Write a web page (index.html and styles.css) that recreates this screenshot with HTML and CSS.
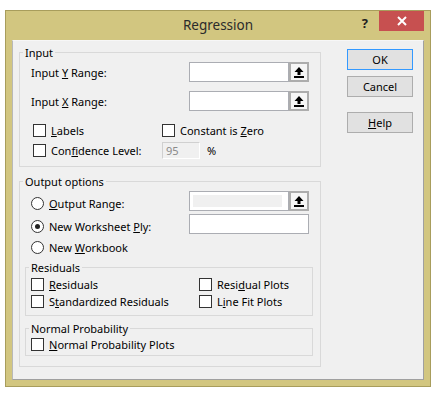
FILE: index.html
```html
<!DOCTYPE html>
<html lang="en">
<head>
    <meta charset="UTF-8">
    <title>Regression</title>
    <link rel="stylesheet" href="styles.css">
</head>
<body>

    <div class="window">
        <div class="titlebar">
            <div></div>
            <div class="title">Regression</div>
            <div class="controls">
                <span class="help-mark">?</span>
                <span class="close-btn">
                    <svg width="10" height="10" viewBox="0 0 10 10"><path d="M1 1 L9 9 M9 1 L1 9" stroke="#fff" stroke-width="2"/></svg>
                </span>
            </div>
        </div>

        <div class="client">
            <div class="groups">
                <fieldset class="group input-group">
                    <legend>Input</legend>
                    <div class="range-row">
                        <span class="range-label">Input <u>Y</u> Range:</span>
                        <div class="range-box">
                            <span class="range-field"></span>
                            <span class="ref-btn"><svg width="10" height="11" viewBox="0 0 10 11"><path d="M5 0 L9.5 5 L6.5 5 L6.5 8 L3.5 8 L3.5 5 L0.5 5 Z" fill="#000"/><rect x="0" y="9" width="10" height="2" fill="#000"/></svg></span>
                        </div>
                    </div>
                    <div class="range-row">
                        <span class="range-label">Input <u>X</u> Range:</span>
                        <div class="range-box">
                            <span class="range-field"></span>
                            <span class="ref-btn"><svg width="10" height="11" viewBox="0 0 10 11"><path d="M5 0 L9.5 5 L6.5 5 L6.5 8 L3.5 8 L3.5 5 L0.5 5 Z" fill="#000"/><rect x="0" y="9" width="10" height="2" fill="#000"/></svg></span>
                        </div>
                    </div>
                    <div class="input-checks">
                        <label class="check"><span class="box"></span><span><u>L</u>abels</span></label>
                        <label class="check"><span class="box"></span><span>Constant is <u>Z</u>ero</span></label>
                        <label class="check"><span class="box"></span><span>Con<u>f</u>idence Level:</span></label>
                        <div class="level">
                            <span class="level-field">95</span>
                            <span class="pct">%</span>
                        </div>
                    </div>
                </fieldset>

                <fieldset class="group output-group">
                    <legend>Output options</legend>
                    <div class="radio-row">
                        <span class="radio-label"><span class="radio"></span><span><u>O</u>utput Range:</span></span>
                        <div class="range-box">
                            <span class="range-field disabled"><span class="dim"></span></span>
                            <span class="ref-btn"><svg width="10" height="11" viewBox="0 0 10 11"><path d="M5 0 L9.5 5 L6.5 5 L6.5 8 L3.5 8 L3.5 5 L0.5 5 Z" fill="#000"/><rect x="0" y="9" width="10" height="2" fill="#000"/></svg></span>
                        </div>
                    </div>
                    <div class="radio-row second">
                        <span class="radio-label"><span class="radio checked"></span><span>New Worksheet <u>P</u>ly:</span></span>
                        <span class="ply-field"></span>
                    </div>
                    <div class="radio-row third">
                        <span class="radio-label"><span class="radio"></span><span>New <u>W</u>orkbook</span></span>
                    </div>

                    <fieldset class="group sub-group residuals">
                        <legend>Residuals</legend>
                        <div class="sub-checks">
                            <label class="check"><span class="box"></span><span><u>R</u>esiduals</span></label>
                            <label class="check"><span class="box"></span><span>Resi<u>d</u>ual Plots</span></label>
                            <label class="check"><span class="box"></span><span>S<u>t</u>andardized Residuals</span></label>
                            <label class="check"><span class="box"></span><span>L<u>i</u>ne Fit Plots</span></label>
                        </div>
                    </fieldset>

                    <fieldset class="group sub-group normal">
                        <legend>Normal Probability</legend>
                        <div class="sub-checks">
                            <label class="check"><span class="box"></span><span><u>N</u>ormal Probability Plots</span></label>
                        </div>
                    </fieldset>
                </fieldset>
            </div>

            <div class="buttons">
                <button class="default">OK</button>
                <button>Cancel</button>
                <button class="help-btn"><u>H</u>elp</button>
            </div>
        </div>
    </div>

</body>
</html>
```

FILE: styles.css
```css
body {
    margin: 0;
    background-color: #fff;
    font-family: "Noto Sans", "Open Sans", sans-serif;
    font-size: 11px;
    color: #000;
}

.window {
    margin: 10px 0 0 5px;
    width: 426px;
    height: 377px;
    box-sizing: border-box;
    border: 1px solid #a89d5c;
    background-color: #d2c680;
    padding: 0 6px 6px 6px;
    display: flex;
    flex-direction: column;
}

.titlebar {
    height: 29px;
    display: grid;
    grid-template-columns: 1fr auto 1fr;
}

.title {
    font-size: 13.5px;
    line-height: 29px;
    color: #2b2b2b;
}

.controls {
    display: flex;
    justify-content: flex-end;
    align-items: flex-start;
}

.help-mark {
    font-weight: bold;
    font-size: 13px;
    line-height: 20px;
    margin-top: 2px;
    margin-right: 11px;
    color: #1e1e1e;
}

.close-btn {
    width: 45px;
    height: 20px;
    background-color: #c75050;
    display: flex;
    align-items: center;
    justify-content: center;
}

.client {
    flex: 1;
    background-color: #f0f0f0;
    border: 1px solid;
    border-color: #f7f7f7 #a0a0a0 #a0a0a0 #b8b8b8;
    padding: 4px 0 0 6px;
    display: flex;
    align-items: flex-start;
}

.groups {
    width: 302px;
}

.group {
    margin: 0;
    border: 1px solid #d9d9d9;
    min-width: 0;
}

.group legend {
    padding: 0 2px;
    margin: 0;
    line-height: 15px;
}

.input-group {
    padding: 2px 0 7px 3px;
}

.range-row {
    display: flex;
    align-items: center;
    height: 20px;
    margin-bottom: 9px;
    padding-left: 8px;
}

.range-label {
    width: 158px;
}

.range-box {
    display: flex;
    width: 120px;
    height: 20px;
}

.range-field {
    width: 100px;
    box-sizing: border-box;
    border: 1px solid #abadb3;
    background-color: #fff;
}

.range-field.disabled {
    padding: 3px;
    display: flex;
}

.range-field .dim {
    flex: 1;
    background-color: #f0f0f0;
    margin-right: 3px;
}

.ref-btn {
    width: 20px;
    box-sizing: border-box;
    border: 2px solid #adadad;
    background-color: #f6f6f6;
    display: flex;
    align-items: center;
    justify-content: center;
}

.input-checks {
    margin-top: 11px;
    padding-left: 10px;
    display: grid;
    grid-template-columns: 129px auto;
    grid-auto-rows: 17px;
    row-gap: 3px;
}

.check {
    display: flex;
    align-items: center;
    white-space: nowrap;
}

.box {
    width: 11px;
    height: 11px;
    border: 1px solid #333;
    background-color: #fff;
    margin-right: 5px;
    flex-shrink: 0;
}

.level {
    display: flex;
    align-items: center;
}

.level-field {
    width: 38px;
    height: 17px;
    box-sizing: border-box;
    border: 1px solid #d0d0d0;
    border-right-color: #fff;
    border-bottom-color: #fff;
    color: #8a8a8a;
    padding-left: 3px;
    line-height: 15px;
}

.pct {
    margin-left: 7px;
}

.output-group {
    margin-top: 7px;
    padding: 2px 7px 10px 3px;
}

.radio-row {
    display: flex;
    align-items: center;
    height: 20px;
    padding-left: 8px;
}

.radio-row.second {
    margin-top: 3px;
}

.radio-row.third {
    margin-top: 6px;
    height: 15px;
}

.radio-label {
    width: 158px;
    display: flex;
    align-items: center;
    padding-top: 5px;
}

.radio-row.third .radio-label {
    padding-top: 0;
}

.radio {
    width: 11px;
    height: 11px;
    border: 1px solid #333;
    border-radius: 50%;
    background-color: #fff;
    margin-right: 5px;
    display: flex;
    align-items: center;
    justify-content: center;
    flex-shrink: 0;
}

.radio.checked::after {
    content: "";
    width: 5px;
    height: 5px;
    border-radius: 50%;
    background-color: #222;
}

.ply-field {
    width: 120px;
    height: 20px;
    box-sizing: border-box;
    border: 1px solid #abadb3;
    background-color: #fff;
}

.sub-group {
    margin-left: 2px;
    padding: 2px 0 6px 3px;
}

.residuals {
    margin-top: 5px;
}

.normal {
    margin-top: 5px;
    padding-top: 1px;
    padding-bottom: 3px;
}

.sub-checks {
    padding-left: 2px;
    display: grid;
    grid-template-columns: 168px auto;
    grid-auto-rows: 15px;
    row-gap: 2px;
}

.buttons {
    margin-left: 26px;
    margin-top: 4px;
    display: flex;
    flex-direction: column;
    width: 66px;
}

.buttons button {
    height: 21px;
    margin: 0 0 6px 0;
    padding: 0;
    font-family: inherit;
    font-size: 11px;
    color: #000;
    background-color: #e1e1e1;
    border: 1px solid #adadad;
}

.buttons button.default {
    border-color: #3399ff;
}

.buttons button.help-btn {
    margin-top: 9px;
}
```
